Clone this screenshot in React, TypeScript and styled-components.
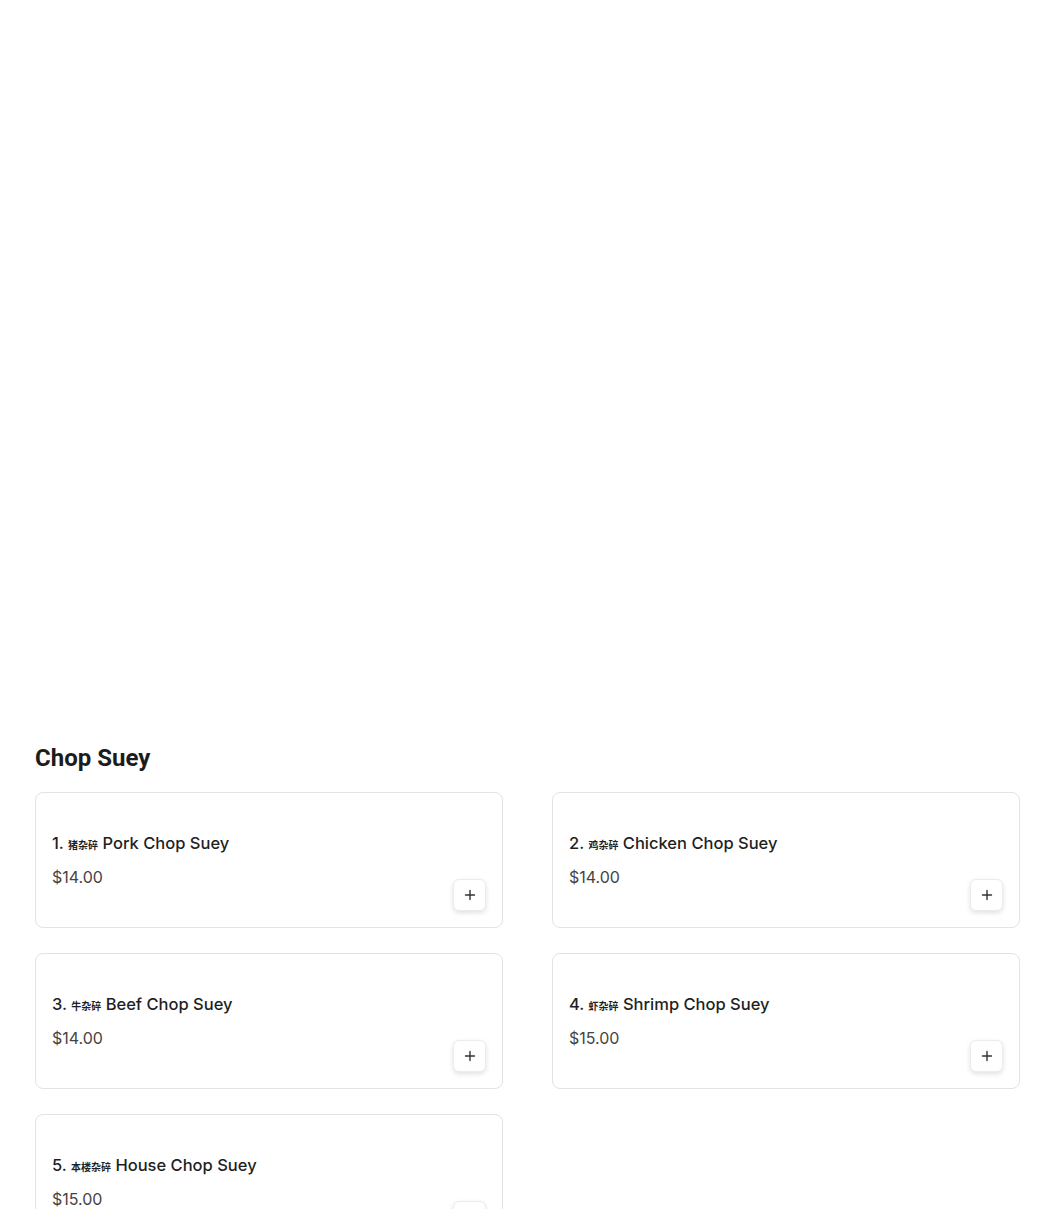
import styled, { createGlobalStyle } from "styled-components";

const GlobalStyle = createGlobalStyle`
  body {
    margin: 0;
    background: #ffffff;
    font-family: Inter, "Noto Sans CJK SC", sans-serif;
    color: #1f1f1f;
  }
`;

const items = [
  { no: 1, zh: "猪杂碎", en: "Pork Chop Suey", price: "$14.00" },
  { no: 2, zh: "鸡杂碎", en: "Chicken Chop Suey", price: "$14.00" },
  { no: 3, zh: "牛杂碎", en: "Beef Chop Suey", price: "$14.00" },
  { no: 4, zh: "虾杂碎", en: "Shrimp Chop Suey", price: "$15.00" },
  { no: 5, zh: "本楼杂碎", en: "House Chop Suey", price: "$15.00" },
];

const PlusIcon = () => (
  <svg width="12" height="12" viewBox="0 0 12 12" fill="none">
    <path d="M6 1.5v9M1.5 6h9" stroke="#333" strokeWidth="1.4" strokeLinecap="round" />
  </svg>
);

export default function App() {
  return (
    <>
      <GlobalStyle />
      <Page>
        <Banner />
        <Section>
          <Heading>Chop Suey</Heading>
          <Grid>
            {items.map((item) => (
              <Card key={item.no}>
                <Info>
                  <Name>
                    {item.no}. <Zh>{item.zh}</Zh> {item.en}
                  </Name>
                  <Price>{item.price}</Price>
                </Info>
                <AddButton aria-label="Add">
                  <PlusIcon />
                </AddButton>
              </Card>
            ))}
          </Grid>
        </Section>
      </Page>
    </>
  );
}

const Page = styled.div`
  padding: 0 30px 0 35px;
`;

const Banner = styled.div`
  height: 742px;
`;

const Section = styled.section`
  display: flex;
  flex-direction: column;
`;

const Heading = styled.h2`
  margin: 0 0 18px;
  font-family: Roboto, "Liberation Sans", sans-serif;
  font-size: 24px;
  font-weight: 700;
  line-height: 32px;
  color: #1c1c1c;
`;

const Grid = styled.div`
  display: grid;
  grid-template-columns: 1fr 1fr;
  column-gap: 49px;
  row-gap: 25px;
`;

const Card = styled.div`
  display: flex;
  justify-content: space-between;
  align-items: flex-end;
  padding: 16px;
  border: 1px solid #e3e3e3;
  border-radius: 8px;
  background: #fff;
`;

const Info = styled.div`
  display: flex;
  flex-direction: column;
  gap: 10px;
  padding: 22px 0 22px;
`;

const Name = styled.div`
  height: 24px;
  font-size: 16.5px;
  font-weight: 500;
  line-height: 24px;
  color: #1f1f1f;
`;

const Zh = styled.span`
  font-family: "Noto Sans CJK SC", sans-serif;
  font-size: 10px;
  font-weight: 700;
  line-height: 1;
`;

const Price = styled.div`
  font-size: 16px;
  font-weight: 400;
  line-height: 24px;
  color: #444;
`;

const AddButton = styled.button`
  display: flex;
  align-items: center;
  justify-content: center;
  width: 33px;
  height: 32px;
  padding: 0;
  border: 1px solid #ececec;
  border-radius: 6px;
  background: #fff;
  box-shadow: 0 2px 5px rgba(0, 0, 0, 0.12);
  cursor: pointer;
`;
